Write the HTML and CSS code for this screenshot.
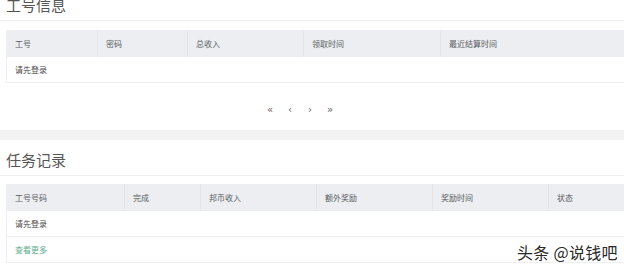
FILE: index.html
```html
<!DOCTYPE html>
<html lang="zh">
<head>
<meta charset="utf-8">
<link rel="stylesheet" href="styles.css">
</head>
<body>
<div class="card card-first">
  <div class="card-head"><h2 class="title">工号信息</h2></div>
  <div class="table t1">
    <div class="row head">
      <div class="cell">工号</div>
      <div class="cell">密码</div>
      <div class="cell">总收入</div>
      <div class="cell">领取时间</div>
      <div class="cell">最近结算时间</div>
    </div>
    <div class="row">
      <div class="cell">请先登录</div>
    </div>
  </div>
  <div class="pager">
    <span class="pg">«</span>
    <span class="pg">‹</span>
    <span class="pg">›</span>
    <span class="pg">»</span>
  </div>
</div>
<div class="card card-second">
  <div class="card-head"><h2 class="title">任务记录</h2></div>
  <div class="table t2">
    <div class="row head">
      <div class="cell">工号号码</div>
      <div class="cell">完成</div>
      <div class="cell">邦币收入</div>
      <div class="cell">额外奖励</div>
      <div class="cell">奖励时间</div>
      <div class="cell">状态</div>
    </div>
    <div class="row">
      <div class="cell">请先登录</div>
    </div>
    <div class="row">
      <div class="cell more">查看更多</div>
    </div>
  </div>
</div>
<div class="watermark">头条 @说钱吧</div>
</body>
</html>
```

FILE: styles.css
```css
html, body {
  margin: 0;
  padding: 0;
}
body {
  width: 624px;
  height: 267px;
  overflow: hidden;
  background: #f3f3f4;
  font-family: "Noto Sans CJK SC", "Noto Sans", sans-serif;
  position: relative;
}
.card {
  background: #ffffff;
}
.card-first {
  margin-top: -3px;
  height: 133px;
  margin-bottom: 10px;
}
.card-second {
  height: 140px;
}
.card-head {
  border-bottom: 1px solid #f0f0f1;
  padding-left: 6px;
}
.card-first .card-head {
  height: 23px;
}
.card-second .card-head {
  padding-top: 12px;
  height: 23px;
}
.title {
  margin: 0;
  font-size: 15px;
  line-height: 15px;
  font-weight: 400;
  color: #555;
}
.table {
  margin-left: 6px;
  width: 640px;
  border-left: 1px solid #f0f0f2;
}
.t1 { margin-top: 9px; }
.t2 { margin-top: 8px; }
.row {
  display: flex;
  height: 25px;
  border-bottom: 1px solid #eeeff1;
  align-items: center;
}
.row.head {
  height: 27px;
  background: #eceef1;
  border-bottom: none;
}
.cell {
  font-size: 8px;
  color: #4a4a4a;
  padding-left: 8px;
  box-sizing: border-box;
  height: 100%;
  display: flex;
  align-items: center;
}
.head .cell {
  color: #5a5d63;
  border-right: 1px solid #e4e6ea;
}
.t1 .head .cell:nth-child(1) { width: 91px; }
.t1 .head .cell:nth-child(2) { width: 90px; }
.t1 .head .cell:nth-child(3) { width: 116px; }
.t1 .head .cell:nth-child(4) { width: 137px; }
.t1 .head .cell:nth-child(5) { flex: 1; border-right: none; }
.t2 .head .cell:nth-child(1) { width: 118px; }
.t2 .head .cell:nth-child(2) { width: 76px; }
.t2 .head .cell:nth-child(3) { width: 116px; }
.t2 .head .cell:nth-child(4) { width: 116px; }
.t2 .head .cell:nth-child(5) { width: 116px; }
.t2 .head .cell:nth-child(6) { flex: 1; border-right: none; }
.more {
  color: #5fb08f;
}
.pager {
  display: flex;
  justify-content: center;
  gap: 12px;
  margin-top: 19px;
  padding-right: 24px;
  height: 14px;
  align-items: center;
}
.pg {
  width: 8px;
  text-align: center;
  font-size: 10px;
  color: #666;
  font-family: "DejaVu Sans", sans-serif;
}
.watermark {
  position: absolute;
  left: 517px;
  top: 240px;
  font-size: 16px;
  color: #2a2a2a;
  letter-spacing: 0.3px;
  text-shadow: 0 0 2px #fff, 0 0 2px #fff;
}
```
